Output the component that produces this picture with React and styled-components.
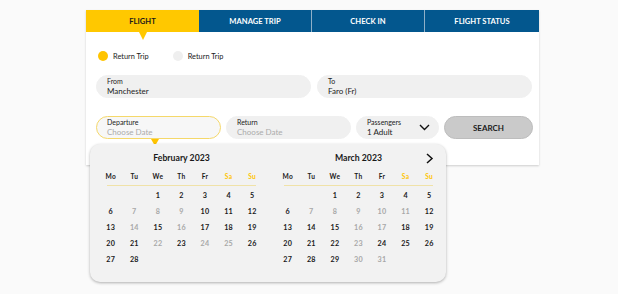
import styled, { createGlobalStyle } from "styled-components";

const Global = createGlobalStyle`
  body {
    margin: 0;
    background: #fafafa;
    font-family: Lato, "Open Sans", sans-serif;
  }
`;

const Page = styled.div`
  padding: 10px 0 12px 86px;
`;

const Widget = styled.div`
  position: relative;
  width: 453px;
  min-height: 272px;
`;

const Card = styled.div`
  background: #fff;
  box-shadow: 0 1px 2px rgba(0, 0, 0, 0.18);
`;

const Tabs = styled.div`
  display: grid;
  grid-template-columns: 113px 112px 113px 115px;
  height: 22px;
`;

const Tab = styled.div`
  position: relative;
  display: flex;
  align-items: center;
  justify-content: center;
  font-size: 7.6px;
  font-weight: 700;
  text-transform: uppercase;
  color: ${(p) => (p.$active ? "#1a1a1a" : "#fff")};
  background: ${(p) => (p.$active ? "#ffc800" : "#03578e")};
  border-left: ${(p) => (p.$first ? "none" : "1px solid #8fb0c8")};

  ${(p) =>
    p.$active &&
    `
    &::after {
      content: "";
      position: absolute;
      left: 50%;
      bottom: -8px;
      margin-left: -4px;
      border-left: 4px solid transparent;
      border-right: 4px solid transparent;
      border-top: 8px solid #ffc800;
    }
  `}
`;

const Body = styled.div`
  padding: 18px 7px 26px 10px;
`;

const RadioRow = styled.div`
  display: flex;
  gap: 24px;
  margin-left: 2px;
  height: 12px;
  align-items: center;
`;

const Radio = styled.label`
  display: flex;
  align-items: center;
  gap: 5px;
  font-size: 7.4px;
  color: #222;
`;

const Dot = styled.span`
  width: 10px;
  height: 10px;
  border-radius: 50%;
  background: ${(p) => (p.$on ? "#ffc400" : "#efefef")};
`;

const FieldRow = styled.div`
  display: grid;
  grid-template-columns: ${(p) => p.$cols};
  gap: ${(p) => p.$gap || "6px"};
  margin-top: ${(p) => p.$top};
`;

const Field = styled.div`
  box-sizing: border-box;
  height: 23px;
  border-radius: 12px;
  background: ${(p) => (p.$focus ? "#f7f7f7" : "#f0f0f0")};
  border: 1px solid ${(p) => (p.$focus ? "#f5d86a" : "#f0f0f0")};
  padding: 0 0 1px 10px;
  display: flex;
  align-items: center;
  justify-content: space-between;
  position: relative;

  ${(p) =>
    p.$focus &&
    `
    &::after {
      content: "";
      position: absolute;
      left: 54px;
      bottom: -8px;
      border-left: 4px solid transparent;
      border-right: 4px solid transparent;
      border-top: 7px solid #ffc400;
    }
  `}
`;

const FieldText = styled.div`
  display: flex;
  flex-direction: column;
  line-height: 1;
`;

const Label = styled.span`
  font-size: 7px;
  color: #222;
`;

const Value = styled.span`
  margin-top: 2px;
  font-size: 8px;
  color: ${(p) => (p.$muted ? "#ababab" : "#222")};
`;

const Chevron = styled.svg`
  margin-right: 8px;
`;

const SearchButton = styled.button`
  height: 23px;
  border-radius: 12px;
  border: 1px solid #bdbdbd;
  background: #cacaca;
  font-family: inherit;
  font-size: 8px;
  font-weight: 700;
  color: #1a1a1a;
  padding: 0;
`;

const Calendar = styled.div`
  position: absolute;
  left: 4px;
  top: 134px;
  width: 356px;
  height: 138px;
  box-sizing: border-box;
  background: #f2f2f2;
  border-radius: 10px;
  box-shadow: 0 1px 3px rgba(0, 0, 0, 0.3);
  display: flex;
  gap: 12px;
  padding: 6px 5px 0 9px;
`;

const Month = styled.div`
  width: 165px;
  position: relative;
`;

const Title = styled.div`
  height: 15px;
  display: flex;
  align-items: center;
  justify-content: center;
  font-size: 8.7px;
  font-weight: 700;
  color: #1a1a1a;
`;

const Next = styled.svg`
  position: absolute;
  right: 7px;
  top: 3px;
`;

const Grid = styled.div`
  display: grid;
  grid-template-columns: repeat(7, 1fr);
  grid-auto-rows: 16px;
  align-items: center;
  justify-items: center;
`;

const Head = styled(Grid)`
  margin-top: 3px;
`;

const Rule = styled.div`
  height: 1px;
  margin: 1px 8px 0;
  background: #f0e2a8;
`;

const HeadCell = styled.span`
  font-size: 6.6px;
  font-weight: 700;
  letter-spacing: 0.4px;
  color: ${(p) => (p.$weekend ? "#ffc400" : "#1a1a1a")};
`;

const Day = styled.span`
  font-size: 7.2px;
  font-weight: 700;
  letter-spacing: 0.3px;
  color: ${(p) => (p.$off ? "#a8a8a8" : "#1a1a1a")};
  grid-column: ${(p) => p.$start || "auto"};
`;

const Days = styled(Grid)`
  margin-top: 1px;
`;

const heads = ["Mo", "Tu", "We", "Th", "Fr", "Sa", "Su"];

const months = [
  { name: "February 2023", start: 3, count: 28, off: [7, 8, 9, 14, 16, 22, 24, 25] },
  {
    name: "March 2023",
    start: 3,
    count: 31,
    off: [7, 8, 9, 10, 11, 16, 17, 23, 30, 31],
    next: true,
  },
];

const MonthView = ({ m }) => (
  <Month>
    <Title>{m.name}</Title>
    {m.next && (
      <Next width="9" height="11" viewBox="0 0 9 11">
        <path d="M2 1l5 4.5L2 10" fill="none" stroke="#111" strokeWidth="1.5" />
      </Next>
    )}
    <Head>
      {heads.map((h, i) => (
        <HeadCell key={h} $weekend={i > 4}>
          {h}
        </HeadCell>
      ))}
    </Head>
    <Rule />
    <Days>
      {Array.from({ length: m.count }, (_, i) => i + 1).map((d) => (
        <Day key={d} $off={m.off.includes(d)} $start={d === 1 ? m.start : undefined}>
          {d}
        </Day>
      ))}
    </Days>
  </Month>
);

const App = () => {
  return (
    <Page>
      <Global />
      <Widget>
        <Card>
          <Tabs>
            <Tab $active $first>
              Flight
            </Tab>
            <Tab $first>Manage Trip</Tab>
            <Tab>Check In</Tab>
            <Tab>Flight Status</Tab>
          </Tabs>
          <Body>
            <RadioRow>
              <Radio>
                <Dot $on />
                Return Trip
              </Radio>
              <Radio>
                <Dot />
                Return Trip
              </Radio>
            </RadioRow>
            <FieldRow $cols="215px 215px" $top="13px">
              <Field>
                <FieldText>
                  <Label>From</Label>
                  <Value>Manchester</Value>
                </FieldText>
              </Field>
              <Field>
                <FieldText>
                  <Label>To</Label>
                  <Value>Faro (Fr)</Value>
                </FieldText>
              </Field>
            </FieldRow>
            <FieldRow $cols="125px 125px 83px 89px" $gap="5px" $top="18px">
              <Field $focus>
                <FieldText>
                  <Label>Departure</Label>
                  <Value $muted>Choose Date</Value>
                </FieldText>
              </Field>
              <Field>
                <FieldText>
                  <Label>Return</Label>
                  <Value $muted>Choose Date</Value>
                </FieldText>
              </Field>
              <Field>
                <FieldText>
                  <Label>Passengers</Label>
                  <Value>1 Adult</Value>
                </FieldText>
                <Chevron width="11" height="7" viewBox="0 0 11 7">
                  <path d="M1 1l4.5 4.5L10 1" fill="none" stroke="#111" strokeWidth="1.4" />
                </Chevron>
              </Field>
              <SearchButton>SEARCH</SearchButton>
            </FieldRow>
          </Body>
        </Card>
        <Calendar>
          {months.map((m) => (
            <MonthView key={m.name} m={m} />
          ))}
        </Calendar>
      </Widget>
    </Page>
  );
};

export default App;
